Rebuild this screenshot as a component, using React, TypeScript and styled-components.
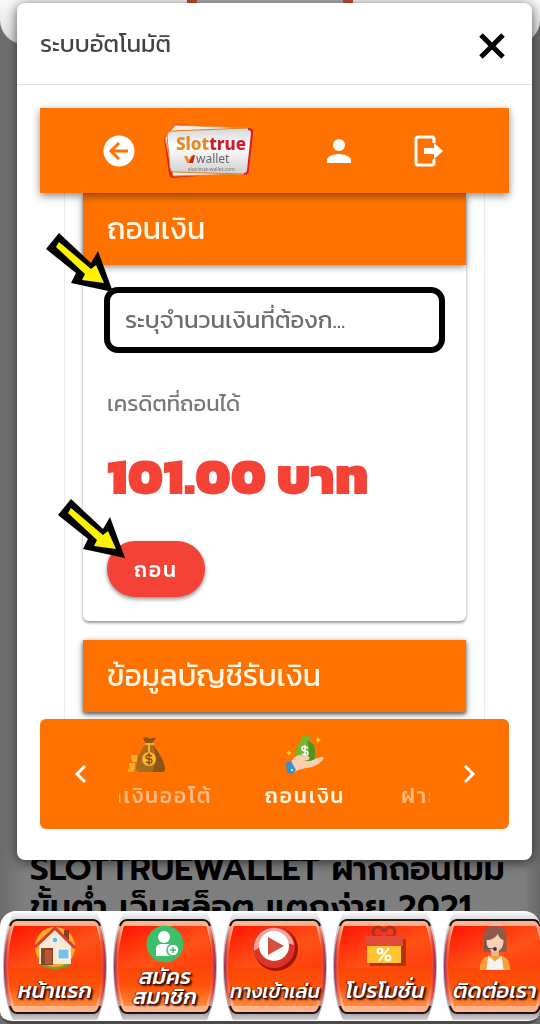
import React from 'react';
import styled, { createGlobalStyle } from 'styled-components';

const thai = `"Kanit", "Prompt", "Noto Sans Thai", "Noto Sans", sans-serif`;
const orange = '#ff7200';

const GlobalStyle = createGlobalStyle`
  * { box-sizing: border-box; }
  body { margin: 0; background: #7b7b7b; font-family: ${thai}; }
  button, input { font-family: inherit; margin: 0; }
  button { border: 0; padding: 0; background: none; cursor: pointer; }
  h1, h2, p { margin: 0; }
  svg { display: block; }
`;

const Page = styled.div`
  min-height: 100vh;
  display: flex;
  flex-direction: column;
  justify-content: space-between;
  background: linear-gradient(90deg, #6c6c6c, #7e7e7e 24px, #7e7e7e calc(100% - 16px), #686868);
`;

const SiteHeader = styled.header`
  height: 44px;
  display: flex;
  justify-content: center;
  border-radius: 0 0 24px 24px;
  background: linear-gradient(#fafafa, #dcdcdc);
`;

const HeaderBanner = styled.div`
  width: 166px;
  height: 4px;
  border: solid #c8502c;
  border-width: 0 10px;
  background: #b5b5b5;
`;

const Footer = styled.div`
  display: flex;
  flex-direction: column;
`;

const Article = styled.h1`
  height: 61px;
  overflow: hidden;
  padding: 0 0 0 30px;
  font-family: "Prompt", ${thai};
  font-size: 33px;
  line-height: 38px;
  font-weight: 600;
  color: #000;
  white-space: nowrap;
`;

const Nav = styled.nav`
  display: flex;
  overflow: hidden;
  padding: 8px 0 6px;
  border-radius: 16px 16px 12px 12px;
  background: #fff;
  border-bottom: 3px solid #4a4a4a;
`;

const NavLink = styled.a`
  flex: 0 0 110px;
  height: 96px;
  padding: 0 3px;
  text-decoration: none;
`;

const NavTile = styled.span`
  position: relative;
  height: 100%;
  display: flex;
  flex-direction: column;
  align-items: center;
  justify-content: space-between;
  padding: 6px 0 8px;
`;

const TileArt = styled.svg`
  position: absolute;
  top: -8px;
  left: 0;
  width: 100%;
  height: 110px;
`;

const TileIcon = styled.span`
  position: relative;
`;

const NavLabel = styled.span`
  position: relative;
`;

const NavText = styled.span<{ $lines: number; $long: boolean }>`
  display: block;
  font-size: ${(p) => (p.$long ? 20 : 22)}px;
  line-height: ${(p) => (p.$lines > 1 ? 20 : 32)}px;
  font-weight: 500;
  font-style: italic;
  text-align: center;
  white-space: nowrap;
  color: #fff;
  text-shadow: 2px 2px 2px #3c0c00, 1px 1px 1px #3c0c00, -1px 0 1px #6c1c00;
`;

const Overlay = styled.div`
  position: fixed;
  inset: 0;
  padding: 3px 8px 0 17px;
`;

const Dialog = styled.section`
  border-radius: 8px;
  background: #fff;
  box-shadow: 0 2px 12px rgba(0, 0, 0, 0.65);
`;

const DialogHeader = styled.header`
  height: 82px;
  display: flex;
  align-items: center;
  justify-content: space-between;
  padding: 4px 27px 0 23px;
  border-bottom: 1px solid #e2e2e2;
`;

const DialogTitle = styled.h2`
  padding-bottom: 4px;
  font-size: 24px;
  line-height: 36px;
  font-weight: 400;
  color: #444;
`;

const DialogBody = styled.div`
  padding: 23px 23px 31px;
`;

const AppBar = styled.header`
  position: relative;
  height: 85px;
  display: grid;
  grid-template-columns: 60px 120px 1fr 90px;
  align-items: center;
  justify-items: center;
  padding: 0 35px 0 49px;
  background: ${orange};
  box-shadow: 0 3px 8px rgba(0, 0, 0, 0.45);
`;

const AccountButton = styled.button`
  margin-left: 24px;
`;

const Content = styled.main`
  margin: 0 24px;
  padding: 0 18px 7px;
  border: solid #ececec;
  border-width: 0 1px;
`;

const Card = styled.section`
  border-radius: 6px;
  background: #fff;
  box-shadow: 0 2px 3px rgba(0, 0, 0, 0.4);
  & + & { margin-top: 19px; border-radius: 0; }
`;

const CardTitle = styled.h2`
  height: 72px;
  display: flex;
  align-items: center;
  padding: 0 24px;
  background: ${orange};
  box-shadow: 0 2px 7px rgba(0, 0, 0, 0.45);
  font-size: 30px;
  line-height: 40px;
  font-weight: 400;
  color: #fff8e8;
`;

const CardBody = styled.div`
  position: relative;
  display: flex;
  flex-direction: column;
  align-items: flex-start;
  padding: 22px 21px 24px;
`;

const Amount = styled.input`
  width: 100%;
  height: 66px;
  padding: 0 15px 1px;
  border: 6px solid #000;
  border-radius: 14px;
  background: #fff;
  font-size: 24px;
  color: #666;
  outline: 0;
  &::placeholder { color: #6d6d6d; opacity: 1; }
`;

const Label = styled.p`
  margin: 35px 3px 0;
  font-size: 22px;
  line-height: 32px;
  color: #777;
`;

const Balance = styled.p`
  margin: 24px 3px 0;
  font-size: 52px;
  line-height: 64px;
  font-weight: 900;
  white-space: nowrap;
  color: #f44336;
`;

const Submit = styled.button`
  height: 56px;
  margin: 33px 3px 0;
  padding: 0 27px;
  border-radius: 28px;
  background: #f44336;
  box-shadow: 0 2px 4px rgba(0, 0, 0, 0.45);
  font-size: 21px;
  font-weight: 500;
  letter-spacing: 2px;
  color: #fff;
`;

const Pointer = styled.svg<{ $top: number; $left: number }>`
  position: absolute;
  top: ${(p) => p.$top}px;
  left: ${(p) => p.$left}px;
`;

const TabBar = styled.nav`
  position: relative;
  height: 110px;
  display: flex;
  align-items: center;
  border-radius: 6px;
  background: ${orange};
`;

const TabArrow = styled.button`
  flex: 0 0 79px;
  height: 100%;
  display: grid;
  place-items: center;
`;

const TabWindow = styled.div`
  flex: 1;
  min-width: 0;
  overflow: hidden;
`;

const TabTrack = styled.div`
  display: flex;
  margin-left: -51px;
`;

const Tab = styled.button<{ $active?: boolean }>`
  flex: 0 0 158px;
  display: flex;
  flex-direction: column;
  align-items: center;
  gap: 6px;
  font-size: 21px;
  line-height: 32px;
  font-weight: 500;
  letter-spacing: 2px;
  white-space: nowrap;
  color: ${(p) => (p.$active ? '#fff6df' : '#ffb981')};
`;

function Arrow({ top, left }: { top: number; left: number }) {
  return (
    <Pointer $top={top} $left={left} width="68" height="60" viewBox="0 0 68 60" aria-hidden="true">
      <path d="M13 0 0 16 30 40 25 50 67 59 52 18 45 30Z" fill="#000" />
      <path d="M13 9 10 14 39 41 36 47 58 50 50 32 45 36Z" fill="#fff200" />
    </Pointer>
  );
}

function TileBackground() {
  return (
    <TileArt viewBox="0 0 104 110" preserveAspectRatio="none" aria-hidden="true">
      <defs>
        <linearGradient id="chrome" x1="0" y1="0" x2="0" y2="1">
          <stop offset="0" stopColor="#f4f4f4" />
          <stop offset=".08" stopColor="#d4d4d4" />
          <stop offset=".3" stopColor="#bbb6c4" />
          <stop offset=".7" stopColor="#bbb6c4" />
          <stop offset=".93" stopColor="#a39d9f" />
          <stop offset="1" stopColor="#d5d0d2" />
        </linearGradient>
        <linearGradient id="rim" x1="0" y1="0" x2="1" y2="0">
          <stop offset="0" stopColor="#8d2a62" />
          <stop offset=".03" stopColor="#e8503a" />
          <stop offset=".08" stopColor="#ffb890" />
          <stop offset=".92" stopColor="#ffb08c" />
          <stop offset=".97" stopColor="#e8402c" />
          <stop offset="1" stopColor="#8d2a62" />
        </linearGradient>
        <linearGradient id="lower" x1="0" y1="0" x2="0" y2="1">
          <stop offset="0" stopColor="#f02a04" />
          <stop offset=".75" stopColor="#ff5208" />
          <stop offset="1" stopColor="#ff8a3c" />
        </linearGradient>
        <linearGradient id="gloss" x1="0" y1="0" x2="1" y2="1">
          <stop offset="0" stopColor="#ff1404" />
          <stop offset=".6" stopColor="#ff5216" />
          <stop offset="1" stopColor="#ff3c0c" />
        </linearGradient>
      </defs>
      <path d="M10 2H94Q104 22 104 55T94 109H10Q0 88 0 55T10 2Z" fill="url(#chrome)" />
      <path d="M14 9H90Q95 9 97 15 103 32 103 56T97 95Q95 102 90 102H14Q9 102 7 95 1 80 1 56T7 15Q9 9 14 9Z" fill="url(#rim)" />
      <path d="M11 15H93Q99 34 99 56T93 95H11Q5 78 5 56T11 15Z" fill="url(#lower)" />
      <path d="M11 15H93Q98 32 98 52 98 57 93 57H11Q6 57 6 52 6 32 11 15Z" fill="url(#gloss)" />
      <path d="M7 15Q9 9 14 9H90Q95 9 97 15M7 95Q9 102 14 102H90Q95 102 97 95" fill="none" stroke="#1c1414" strokeWidth="2" />
    </TileArt>
  );
}

function Logo() {
  return (
    <svg width="92" height="58" viewBox="0 0 92 58" role="img" aria-label="Slot true wallet">
      <defs>
        <linearGradient id="plate" x1="0" y1="0" x2="0" y2="1">
          <stop offset="0" stopColor="#d5d5d5" />
          <stop offset=".4" stopColor="#fff" />
          <stop offset="1" stopColor="#cfcfcf" />
        </linearGradient>
      </defs>
      <path d="M12 2 88 7Q91 7 90 11L85 50 10 56Q7 56 6 52L1 16Z" fill="#de2419" />
      <path d="M12 3 84 6 82 52 10 54 2 16Z" fill="#f4ede5" stroke="#e88a35" />
      <path d="M9 9 84 6Q89 6 89 11L85 48Q85 52 81 52L11 50Q7 50 7 46L4 14Q4 9 9 9Z" fill="url(#plate)" stroke="#e07c28" />
      <path d="M85 7Q89 7 89 11L85 48Q85 52 81 52" fill="none" stroke="#d81d2c" strokeWidth="2" />
      <text x="13" y="28" fontFamily="Noto Sans" fontWeight="800" fontSize="17" fill="#e58a23">Slot<tspan fill="#cc1c32">true</tspan></text>
      <path d="M21 34h3l2 4 2-4h2l-2 7h-4Z" fill="#f08a1e" />
      <path d="M27 38 30 33h2l-2 8h-4Z" fill="#c9201f" />
      <text x="33" y="41" fontFamily="Noto Sans" fontSize="12" fill="#666">wallet</text>
      <text x="25" y="49" fontFamily="Noto Sans" fontSize="5" fill="#777">slot-true-wallet.com</text>
    </svg>
  );
}

function MoneyBag() {
  return (
    <svg width="38" height="38" viewBox="0 0 38 38" aria-hidden="true">
      <path d="M15 2q4-2 7 1 3-2 6-1l-4 6h-6Z" fill="#8b5415" />
      <path d="M17 9h8q4 5 8 12 4 8 4 12 0 3-4 3H12q-4 0-4-4 1-13 9-23Z" fill="#a96a22" />
      <path d="M25 9q4 5 8 12 4 8 4 12 0 3-4 3h-9q7-12 1-27Z" fill="#8b5415" />
      <path d="M17 8h9M21 9v7" stroke="#f9ae27" strokeWidth="2" />
      <circle cx="21" cy="23" r="7" fill="#fbb62e" />
      <path d="M24 20q-6-2-6 1 0 2 3 2t3 2q0 3-6 1M21 17v12" fill="none" stroke="#8d4d0c" strokeWidth="1.4" />
      <path d="M3 19h6v4H3zM4 23h5v3H4zM1 27h6v3H1zM2 30h5v3H2zM0 33h6v3H0z" fill="#fbaa28" />
    </svg>
  );
}

function HandMoney() {
  return (
    <svg width="38" height="38" viewBox="0 0 38 38" aria-hidden="true">
      <path d="M15 1q2-2 5-1 3-1 4 1l-1 4q6 3 6 9v11H10V14q0-6 6-9Z" fill="#78b52b" />
      <path d="M23 5q6 3 6 9v11h-8q4-10 0-20Z" fill="#529221" />
      <path d="M22 12q-6-3-6 0 0 3 3 3t3 3q-1 2-6 0M19 9v12" fill="none" stroke="#fff" strokeWidth="1.600" />
      <path d="M4 28q4-9 10-9l8 1q3 2 0 4l-4 1q6 1 11-2l6-2q4 0 2 3-8 8-17 8l-8 2-4 2Z" fill="#f9d0ad" />
      <path d="m0 26 5-1 5 9-4 4-5-1Z" fill="#3e8fd0" />
      <circle cx="6" cy="34" r="1" fill="#fff" />
      <path d="m32 1 1 2 2 1-2 1-1 2-1-2-2-1 2-1ZM3 14l1 2 2 1-2 1-1 2-1-2-2-1 2-1Z" fill="#ffd02e" />
    </svg>
  );
}

function HouseIcon() {
  return (
    <svg width="44" height="44" viewBox="0 0 44 44" aria-hidden="true">
      <circle cx="22" cy="22" r="20" fill="#f6ad22" />
      <path d="M7 36q15 12 30 0v4q-14 8-30 0Z" fill="#64a83c" />
      <path d="M31 5h5v14l-5-5Z" fill="#8c3a26" />
      <path d="M6 20 22 5l16 15v19H6Z" fill="#f6ead2" />
      <path d="M2 22 22 3l20 20" fill="none" stroke="#d93a37" strokeWidth="3" />
      <circle cx="22" cy="15" r="3" fill="#6fb6dc" stroke="#fff" />
      <path d="M8 23h12v17H8Z" fill="#91402a" />
      <path d="M12 25h7v14h-7Z" fill="#b65736" />
      <path d="M25 24h11v10H25Z" fill="#77c0e6" stroke="#fff" />
    </svg>
  );
}

function SignUpIcon() {
  return (
    <svg width="38" height="38" viewBox="0 0 38 38" aria-hidden="true">
      <circle cx="19" cy="19" r="18.500" fill="#3ebd6d" />
      <circle cx="18" cy="12" r="6" fill="#fff" />
      <path d="M10 31V24q0-5 6-5h5q5 0 5 5v7Z" fill="#fff" />
      <circle cx="27" cy="25" r="6" fill="#fff" stroke="#3ebd6d" strokeWidth="1.500" />
      <path d="M27 22v6M24 25h6" stroke="#3ebd6d" strokeWidth="1.500" />
    </svg>
  );
}

function PlayIcon() {
  return (
    <svg width="46" height="46" viewBox="0 0 46 46" aria-hidden="true">
      <circle cx="24" cy="24" r="22" fill="#a5140c" />
      <circle cx="22" cy="22" r="21" fill="#d93528" />
      <path d="M2 26A20 20 0 0 1 42 20Q20 12 2 26Z" fill="#f2a599" />
      <circle cx="22" cy="21" r="15" fill="#fff" />
      <path d="M16 12 32 21 16 30Z" fill="#d5503f" />
    </svg>
  );
}

function GiftIcon() {
  return (
    <svg width="44" height="42" viewBox="0 0 44 42" aria-hidden="true">
      <path d="M6 14h37v27H7Z" fill="#812305" opacity=".6" />
      <circle cx="15" cy="7" r="5" fill="none" stroke="#a83426" strokeWidth="3" />
      <circle cx="27" cy="7" r="5" fill="none" stroke="#a83426" strokeWidth="3" />
      <path d="M18 7h6v6h-6Z" fill="#d74332" />
      <path d="M2 11h38v10H2Z" fill="#e24936" />
      <path d="M4 21h34v17H4Z" fill="#ffc42e" />
      <circle cx="17" cy="26" r="2.500" fill="none" stroke="#fff" strokeWidth="2" />
      <circle cx="25" cy="33" r="2.500" fill="none" stroke="#fff" strokeWidth="2" />
      <path d="m26 23-10 13" stroke="#fff" strokeWidth="2" />
    </svg>
  );
}

function SupportIcon() {
  return (
    <svg width="34" height="46" viewBox="0 0 34 48" aria-hidden="true">
      <path d="M5 12Q5 1 17 1t12 11v16H5Z" fill="#8d5b4b" />
      <path d="M13 22h8v12h-8Z" fill="#f4b291" />
      <path d="M8 16q9-1 12-7 1 5 6 7 0 11-9 12-9-1-9-12Z" fill="#fcd0b4" />
      <path d="M1 47q0-13 10-15h12q10 2 10 15Z" fill="#f7a13c" />
      <path d="m10 32 7 6 7-6 2 15H8Z" fill="#f4f3f4" />
      <path d="M7 17v7l9 1" fill="none" stroke="#4e4e64" strokeWidth="1" />
      <circle cx="17" cy="25" r="2" fill="#333348" />
    </svg>
  );
}

const navItems = [
  { lines: ['หน้าแรก'], icon: <HouseIcon /> },
  { lines: ['สมัคร', 'สมาชิก'], icon: <SignUpIcon /> },
  { lines: ['ทางเข้าเล่น'], icon: <PlayIcon /> },
  { lines: ['โปรโมชั่น'], icon: <GiftIcon /> },
  { lines: ['ติดต่อเรา'], icon: <SupportIcon /> },
];

export default function App() {
  return (
    <>
      <GlobalStyle />
      <Page>
        <SiteHeader><HeaderBanner /></SiteHeader>
        <Footer>
          <Article>SLOTTRUEWALLET ฝากถอนไม่มี<br />ขั้นต่ำ เว็บสล็อต แตกง่าย 2021</Article>
          <Nav aria-label="เมนูหลัก">
            {navItems.map((item) => (
              <NavLink href="#" key={item.lines[0]}>
                <NavTile>
                  <TileBackground />
                  <TileIcon>{item.icon}</TileIcon>
                  <NavLabel>
                    {item.lines.map((line) => (
                      <NavText key={line} $lines={item.lines.length} $long={line.length > 10}>{line}</NavText>
                    ))}
                  </NavLabel>
                </NavTile>
              </NavLink>
            ))}
          </Nav>
        </Footer>
      </Page>
      <Overlay>
        <Dialog role="dialog" aria-labelledby="dialog-title">
          <DialogHeader>
            <DialogTitle id="dialog-title">ระบบอัตโนมัติ</DialogTitle>
            <button aria-label="ปิด">
              <svg width="26" height="26" viewBox="0 0 26 26"><path d="m2 2 22 22M24 2 2 24" stroke="#000" strokeWidth="5" /></svg>
            </button>
          </DialogHeader>
          <DialogBody>
            <AppBar>
              <button aria-label="ย้อนกลับ">
                <svg width="32" height="32" viewBox="0 0 32 32">
                  <circle cx="16" cy="16" r="15.500" fill="#fff" />
                  <path d="M25 16H9M16 8l-8 8 8 8" fill="none" stroke={orange} strokeWidth="3" />
                </svg>
              </button>
              <Logo />
              <AccountButton aria-label="บัญชี">
                <svg width="26" height="26" viewBox="0 0 26 26" fill="#fff">
                  <circle cx="13" cy="7" r="6" />
                  <path d="M1 25v-3c0-4 8-6 12-6s12 2 12 6v3Z" />
                </svg>
              </AccountButton>
              <button aria-label="ออกจากระบบ">
                <svg width="30" height="32" viewBox="0 0 30 32">
                  <path d="M20 8V4q0-2-2-2H4Q2 2 2 4v24q0 2 2 2h14q2 0 2-2v-4" fill="none" stroke="#fff" strokeWidth="3" />
                  <path d="M10 13h10V8l9 8-9 8v-5H10Z" fill="#fff" />
                </svg>
              </button>
            </AppBar>
            <Content>
              <Card>
                <CardTitle>ถอนเงิน</CardTitle>
                <CardBody>
                  <Amount aria-label="จำนวนเงิน" placeholder="ระบุจำนวนเงินที่ต้องก..." />
                  <Label>เครดิตที่ถอนได้</Label>
                  <Balance>101.00 บาท</Balance>
                  <Submit>ถอน</Submit>
                  <Arrow top={-32} left={-37} />
                  <Arrow top={234} left={-25} />
                </CardBody>
              </Card>
              <Card>
                <CardTitle>ข้อมูลบัญชีรับเงิน</CardTitle>
              </Card>
            </Content>
            <TabBar aria-label="ธุรกรรม">
              <TabArrow aria-label="ก่อนหน้า">
                <svg width="12" height="20" viewBox="0 0 12 20"><path d="m11 2-8 8 8 8" fill="none" stroke="#fff" strokeWidth="3" /></svg>
              </TabArrow>
              <TabWindow>
                <TabTrack>
                  <Tab><MoneyBag />ฝากเงินออโต้</Tab>
                  <Tab $active><HandMoney />ถอนเงิน</Tab>
                  <Tab><svg width="38" height="38" aria-hidden="true" />ฝากเงินสลิป</Tab>
                </TabTrack>
              </TabWindow>
              <TabArrow aria-label="ถัดไป">
                <svg width="12" height="20" viewBox="0 0 12 20"><path d="m1 2 8 8-8 8" fill="none" stroke="#fff" strokeWidth="3" /></svg>
              </TabArrow>
            </TabBar>
          </DialogBody>
        </Dialog>
      </Overlay>
    </>
  );
}
